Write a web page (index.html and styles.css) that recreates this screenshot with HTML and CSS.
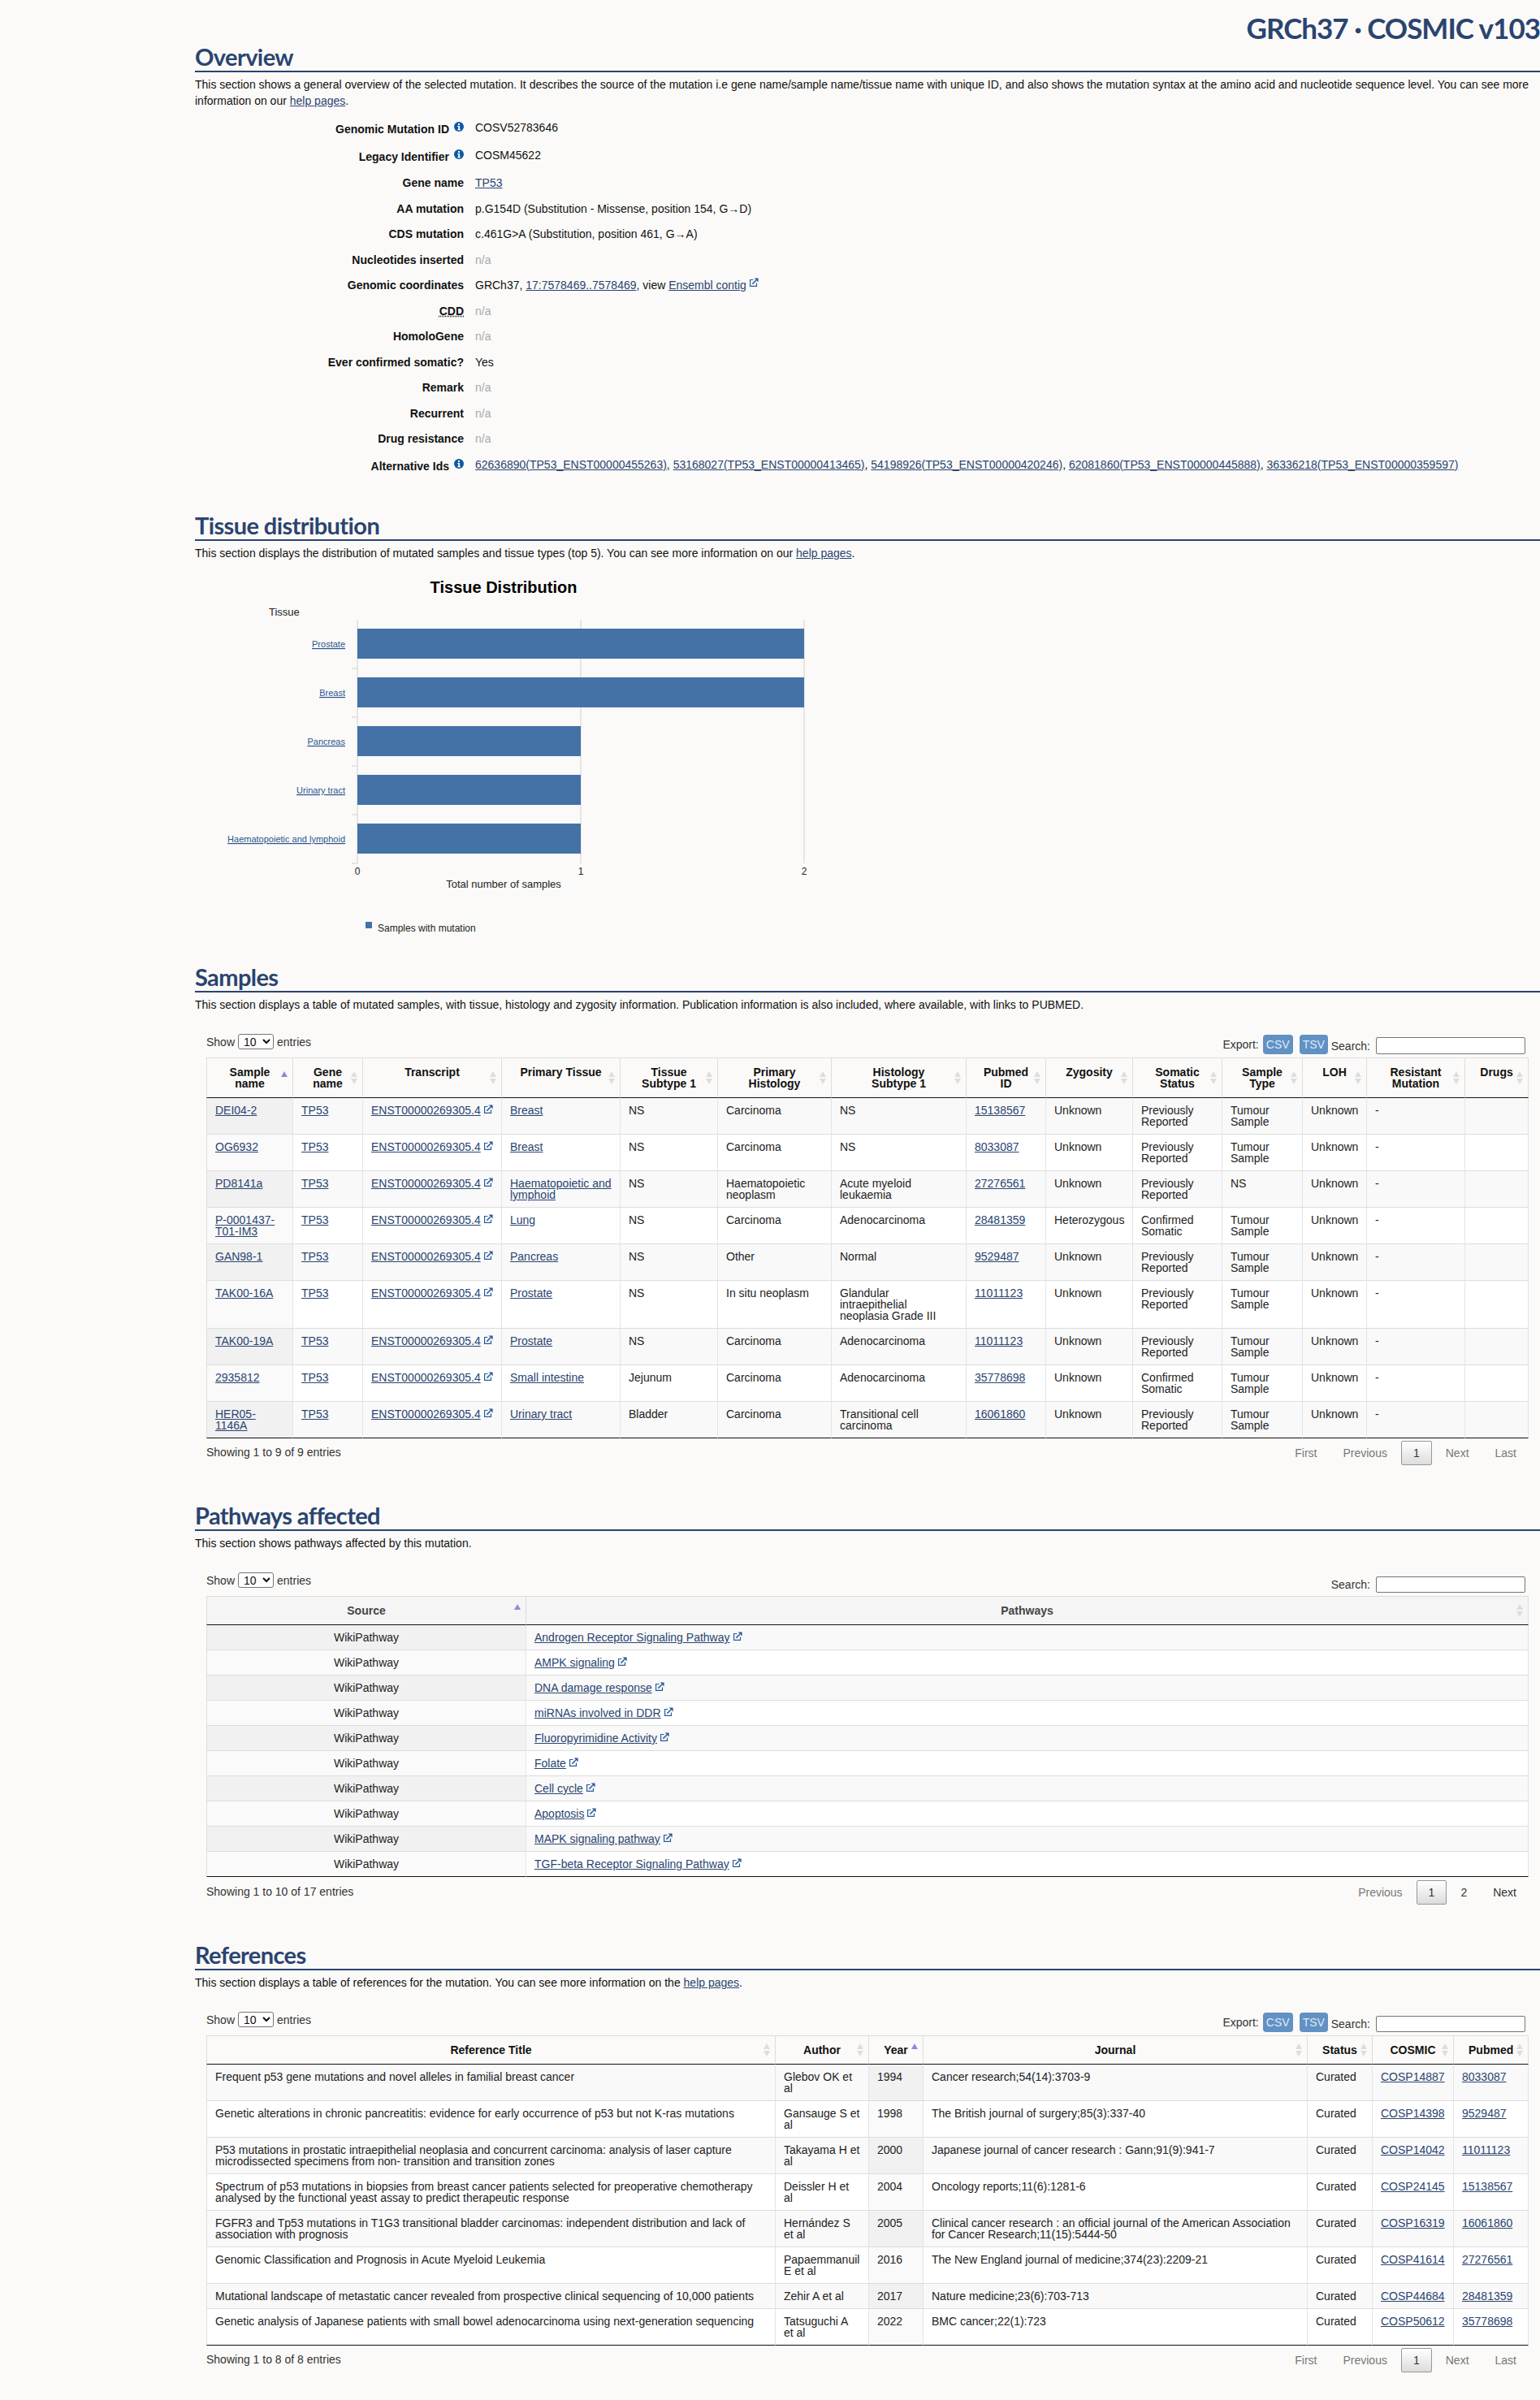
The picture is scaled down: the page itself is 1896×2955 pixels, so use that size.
FILE: index.html
```html
<!DOCTYPE html>
<html lang="en">
<head>
<meta charset="utf-8">
<title>COSMIC mutation overview</title>
<link rel="stylesheet" href="styles.css">
</head>
<body>
<svg class="sprite" xmlns="http://www.w3.org/2000/svg">
  <symbol id="ext" viewBox="0 0 11 11">
    <path d="M4.5 2.5H.6v7.9h7.9V6.5" fill="none" stroke="currentColor" stroke-width="1.2"/>
    <path d="M3.4 7.6 8 3" fill="none" stroke="currentColor" stroke-width="1.5"/>
    <path d="M5.6.4h5v5z" fill="currentColor"/>
  </symbol>
  <symbol id="info" viewBox="0 0 12 12">
    <circle cx="6" cy="6" r="6" fill="currentColor"/>
    <rect x="5" y="2" width="2" height="2" fill="#fff"/>
    <path d="M4.2 5h2.9v4.2h1V10.2H4.2V9.2h1V6H4.2z" fill="#fff"/>
  </symbol>
</svg>

<header class="site-title">GRCh37 · COSMIC v103</header>

<main class="content">
  <section class="sec sec-overview">
    <h2>Overview</h2>
    <p class="desc">This section shows a general overview of the selected mutation. It describes the source of the mutation i.e gene name/sample name/tissue name with unique ID, and also shows the mutation syntax at the amino acid and nucleotide sequence level. You can see more information on our <a href="#">help pages</a>.</p>
    <div class="facts">
      <div class="fact tall"><div class="lab"><span class="lab-t">Genomic Mutation ID</span><svg class="ic-info"><use href="#info"/></svg></div><div>COSV52783646</div></div>
      <div class="fact tall"><div class="lab"><span class="lab-t">Legacy Identifier</span><svg class="ic-info"><use href="#info"/></svg></div><div>COSM45622</div></div>
      <div class="fact"><div class="lab">Gene name</div><div><a href="#">TP53</a></div></div>
      <div class="fact"><div class="lab">AA mutation</div><div>p.G154D (Substitution - Missense, position 154, G→D)</div></div>
      <div class="fact"><div class="lab">CDS mutation</div><div>c.461G&gt;A (Substitution, position 461, G→A)</div></div>
      <div class="fact"><div class="lab">Nucleotides inserted</div><div class="na">n/a</div></div>
      <div class="fact"><div class="lab">Genomic coordinates</div><div>GRCh37, <a href="#">17:7578469..7578469</a>, view <a href="#">Ensembl contig</a><svg class="ic-ext"><use href="#ext"/></svg></div></div>
      <div class="fact"><div class="lab"><abbr>CDD</abbr></div><div class="na">n/a</div></div>
      <div class="fact"><div class="lab">HomoloGene</div><div class="na">n/a</div></div>
      <div class="fact"><div class="lab">Ever confirmed somatic?</div><div>Yes</div></div>
      <div class="fact"><div class="lab">Remark</div><div class="na">n/a</div></div>
      <div class="fact"><div class="lab">Recurrent</div><div class="na">n/a</div></div>
      <div class="fact"><div class="lab">Drug resistance</div><div class="na">n/a</div></div>
      <div class="fact"><div class="lab"><span class="lab-t">Alternative Ids</span><svg class="ic-info"><use href="#info"/></svg></div><div><a href="#">62636890(TP53_ENST00000455263)</a>, <a href="#">53168027(TP53_ENST00000413465)</a>, <a href="#">54198926(TP53_ENST00000420246)</a>, <a href="#">62081860(TP53_ENST00000445888)</a>, <a href="#">36336218(TP53_ENST00000359597)</a></div></div>
    </div>
  </section>

  <section class="sec sec-tissue">
    <h2>Tissue distribution</h2>
    <p class="desc">This section displays the distribution of mutated samples and tissue types (top 5). You can see more information on our <a href="#">help pages</a>.</p>
    <svg class="chart" width="1000" height="485" viewBox="0 0 1000 485" xmlns="http://www.w3.org/2000/svg">
      <text class="ch-title" x="380" y="30">Tissue Distribution</text>
      <text class="ch-axis" x="91" y="58">Tissue</text>
      <g class="ch-grid">
        <line x1="200" y1="63" x2="200" y2="363"/>
        <line x1="475" y1="63" x2="475" y2="363"/>
        <line x1="750" y1="63" x2="750" y2="363"/>
        <line x1="193" y1="123" x2="200" y2="123"/>
        <line x1="193" y1="183" x2="200" y2="183"/>
        <line x1="193" y1="243" x2="200" y2="243"/>
        <line x1="193" y1="303" x2="200" y2="303"/>
        <line x1="193" y1="363" x2="200" y2="363"/>
      </g>
      <g class="ch-bars">
        <rect x="200" y="74" width="550" height="37"/>
        <rect x="200" y="134" width="550" height="37"/>
        <rect x="200" y="194" width="275" height="37"/>
        <rect x="200" y="254" width="275" height="37"/>
        <rect x="200" y="314" width="275" height="37"/>
      </g>
      <g class="ch-cats">
        <a href="#"><text x="185" y="97">Prostate</text></a>
        <a href="#"><text x="185" y="157">Breast</text></a>
        <a href="#"><text x="185" y="217">Pancreas</text></a>
        <a href="#"><text x="185" y="277">Urinary tract</text></a>
        <a href="#"><text x="185" y="337">Haematopoietic and lymphoid</text></a>
      </g>
      <g class="ch-nums">
        <text x="200" y="377">0</text>
        <text x="475" y="377">1</text>
        <text x="750" y="377">2</text>
      </g>
      <text class="ch-xtitle" x="380" y="393">Total number of samples</text>
      <rect class="ch-leg" x="210" y="435" width="8" height="8"/>
      <text class="ch-legt" x="225" y="447">Samples with mutation</text>
    </svg>
  </section>

  <section class="sec sec-samples">
    <h2>Samples</h2>
    <p class="desc">This section displays a table of mutated samples, with tissue, histology and zygosity information. Publication information is also included, where available, with links to PUBMED.</p>
    <div class="dt">
      <div class="dt-top">
        <label class="dt-len">Show <select><option>10</option></select> entries</label>
        <div class="dt-right"><span class="dt-exp">Export:</span><a class="btn btn-csv">CSV</a><a class="btn btn-tsv">TSV</a><label class="dt-search">Search:<input type="text"></label></div>
      </div>
      <table class="tbl t-samples">
        <colgroup><col class="s1"><col class="s2"><col class="s3"><col class="s4"><col class="s5"><col class="s6"><col class="s7"><col class="s8"><col class="s9"><col class="s10"><col class="s11"><col class="s12"><col class="s13"><col class="s14"></colgroup>
        <thead><tr>
          <th class="sorted">Sample name</th><th class="sortable">Gene name</th><th class="sortable">Transcript</th><th class="sortable">Primary Tissue</th><th class="sortable">Tissue Subtype 1</th><th class="sortable">Primary Histology</th><th class="sortable">Histology<br>Subtype 1</th><th class="sortable">Pubmed ID</th><th class="sortable">Zygosity</th><th class="sortable">Somatic Status</th><th class="sortable">Sample Type</th><th class="sortable">LOH</th><th class="sortable">Resistant Mutation</th><th class="sortable">Drugs</th>
        </tr></thead>
        <tbody>
          <tr><td class="s-col"><a href="#">DEI04-2</a></td><td><a href="#">TP53</a></td><td class="nw"><a href="#">ENST00000269305.4</a><svg class="ic-ext"><use href="#ext"/></svg></td><td><a href="#">Breast</a></td><td>NS</td><td>Carcinoma</td><td>NS</td><td><a href="#">15138567</a></td><td>Unknown</td><td>Previously Reported</td><td>Tumour Sample</td><td>Unknown</td><td>-</td><td></td></tr>
          <tr><td class="s-col"><a href="#">OG6932</a></td><td><a href="#">TP53</a></td><td class="nw"><a href="#">ENST00000269305.4</a><svg class="ic-ext"><use href="#ext"/></svg></td><td><a href="#">Breast</a></td><td>NS</td><td>Carcinoma</td><td>NS</td><td><a href="#">8033087</a></td><td>Unknown</td><td>Previously Reported</td><td>Tumour Sample</td><td>Unknown</td><td>-</td><td></td></tr>
          <tr><td class="s-col"><a href="#">PD8141a</a></td><td><a href="#">TP53</a></td><td class="nw"><a href="#">ENST00000269305.4</a><svg class="ic-ext"><use href="#ext"/></svg></td><td><a href="#">Haematopoietic and lymphoid</a></td><td>NS</td><td>Haematopoietic neoplasm</td><td>Acute myeloid leukaemia</td><td><a href="#">27276561</a></td><td>Unknown</td><td>Previously Reported</td><td>NS</td><td>Unknown</td><td>-</td><td></td></tr>
          <tr><td class="s-col"><a href="#">P-0001437-T01-IM3</a></td><td><a href="#">TP53</a></td><td class="nw"><a href="#">ENST00000269305.4</a><svg class="ic-ext"><use href="#ext"/></svg></td><td><a href="#">Lung</a></td><td>NS</td><td>Carcinoma</td><td>Adenocarcinoma</td><td><a href="#">28481359</a></td><td>Heterozygous</td><td>Confirmed Somatic</td><td>Tumour Sample</td><td>Unknown</td><td>-</td><td></td></tr>
          <tr><td class="s-col"><a href="#">GAN98-1</a></td><td><a href="#">TP53</a></td><td class="nw"><a href="#">ENST00000269305.4</a><svg class="ic-ext"><use href="#ext"/></svg></td><td><a href="#">Pancreas</a></td><td>NS</td><td>Other</td><td>Normal</td><td><a href="#">9529487</a></td><td>Unknown</td><td>Previously Reported</td><td>Tumour Sample</td><td>Unknown</td><td>-</td><td></td></tr>
          <tr><td class="s-col"><a href="#">TAK00-16A</a></td><td><a href="#">TP53</a></td><td class="nw"><a href="#">ENST00000269305.4</a><svg class="ic-ext"><use href="#ext"/></svg></td><td><a href="#">Prostate</a></td><td>NS</td><td>In situ neoplasm</td><td>Glandular intraepithelial neoplasia Grade III</td><td><a href="#">11011123</a></td><td>Unknown</td><td>Previously Reported</td><td>Tumour Sample</td><td>Unknown</td><td>-</td><td></td></tr>
          <tr><td class="s-col"><a href="#">TAK00-19A</a></td><td><a href="#">TP53</a></td><td class="nw"><a href="#">ENST00000269305.4</a><svg class="ic-ext"><use href="#ext"/></svg></td><td><a href="#">Prostate</a></td><td>NS</td><td>Carcinoma</td><td>Adenocarcinoma</td><td><a href="#">11011123</a></td><td>Unknown</td><td>Previously Reported</td><td>Tumour Sample</td><td>Unknown</td><td>-</td><td></td></tr>
          <tr><td class="s-col"><a href="#">2935812</a></td><td><a href="#">TP53</a></td><td class="nw"><a href="#">ENST00000269305.4</a><svg class="ic-ext"><use href="#ext"/></svg></td><td><a href="#">Small intestine</a></td><td>Jejunum</td><td>Carcinoma</td><td>Adenocarcinoma</td><td><a href="#">35778698</a></td><td>Unknown</td><td>Confirmed Somatic</td><td>Tumour Sample</td><td>Unknown</td><td>-</td><td></td></tr>
          <tr><td class="s-col"><a href="#">HER05-1146A</a></td><td><a href="#">TP53</a></td><td class="nw"><a href="#">ENST00000269305.4</a><svg class="ic-ext"><use href="#ext"/></svg></td><td><a href="#">Urinary tract</a></td><td>Bladder</td><td>Carcinoma</td><td>Transitional cell carcinoma</td><td><a href="#">16061860</a></td><td>Unknown</td><td>Previously Reported</td><td>Tumour Sample</td><td>Unknown</td><td>-</td><td></td></tr>
        </tbody>
      </table>
      <div class="dt-bottom">
        <div class="dt-info">Showing 1 to 9 of 9 entries</div>
        <div class="pager"><a class="off">First</a><a class="off">Previous</a><a class="cur">1</a><a class="off">Next</a><a class="off">Last</a></div>
      </div>
    </div>
  </section>

  <section class="sec sec-pathways">
    <h2>Pathways affected</h2>
    <p class="desc">This section shows pathways affected by this mutation.</p>
    <div class="dt">
      <div class="dt-top">
        <label class="dt-len">Show <select><option>10</option></select> entries</label>
        <div class="dt-right"><label class="dt-search">Search:<input type="text" class="in-short"></label></div>
      </div>
      <table class="tbl t-path">
        <colgroup><col class="p1"><col class="p2"></colgroup>
        <thead><tr><th class="sorted">Source</th><th class="sortable">Pathways</th></tr></thead>
        <tbody>
          <tr><td class="s-col ctr">WikiPathway</td><td><a href="#">Androgen Receptor Signaling Pathway</a><svg class="ic-ext"><use href="#ext"/></svg></td></tr>
          <tr><td class="s-col ctr">WikiPathway</td><td><a href="#">AMPK signaling</a><svg class="ic-ext"><use href="#ext"/></svg></td></tr>
          <tr><td class="s-col ctr">WikiPathway</td><td><a href="#">DNA damage response</a><svg class="ic-ext"><use href="#ext"/></svg></td></tr>
          <tr><td class="s-col ctr">WikiPathway</td><td><a href="#">miRNAs involved in DDR</a><svg class="ic-ext"><use href="#ext"/></svg></td></tr>
          <tr><td class="s-col ctr">WikiPathway</td><td><a href="#">Fluoropyrimidine Activity</a><svg class="ic-ext"><use href="#ext"/></svg></td></tr>
          <tr><td class="s-col ctr">WikiPathway</td><td><a href="#">Folate</a><svg class="ic-ext"><use href="#ext"/></svg></td></tr>
          <tr><td class="s-col ctr">WikiPathway</td><td><a href="#">Cell cycle</a><svg class="ic-ext"><use href="#ext"/></svg></td></tr>
          <tr><td class="s-col ctr">WikiPathway</td><td><a href="#">Apoptosis</a><svg class="ic-ext"><use href="#ext"/></svg></td></tr>
          <tr><td class="s-col ctr">WikiPathway</td><td><a href="#">MAPK signaling pathway</a><svg class="ic-ext"><use href="#ext"/></svg></td></tr>
          <tr><td class="s-col ctr">WikiPathway</td><td><a href="#">TGF-beta Receptor Signaling Pathway</a><svg class="ic-ext"><use href="#ext"/></svg></td></tr>
        </tbody>
      </table>
      <div class="dt-bottom dt-bottom-low">
        <div class="dt-info">Showing 1 to 10 of 17 entries</div>
        <div class="pager"><a class="off">Previous</a><a class="cur">1</a><a class="on">2</a><a class="on">Next</a></div>
      </div>
    </div>
  </section>

  <section class="sec sec-refs">
    <h2>References</h2>
    <p class="desc">This section displays a table of references for the mutation. You can see more information on the <a href="#">help pages</a>.</p>
    <div class="dt">
      <div class="dt-top">
        <label class="dt-len">Show <select><option>10</option></select> entries</label>
        <div class="dt-right"><span class="dt-exp">Export:</span><a class="btn btn-csv">CSV</a><a class="btn btn-tsv">TSV</a><label class="dt-search">Search:<input type="text" class="in-short"></label></div>
      </div>
      <table class="tbl t-refs">
        <colgroup><col class="r1"><col class="r2"><col class="r3"><col class="r4"><col class="r5"><col class="r6"><col class="r7"></colgroup>
        <thead><tr><th class="sortable">Reference Title</th><th class="sortable">Author</th><th class="sorted">Year</th><th class="sortable">Journal</th><th class="sortable">Status</th><th class="sortable">COSMIC</th><th class="sortable">Pubmed</th></tr></thead>
        <tbody>
          <tr><td>Frequent p53 gene mutations and novel alleles in familial breast cancer</td><td>Glebov OK et al</td><td class="s-col">1994</td><td>Cancer research;54(14):3703-9</td><td>Curated</td><td><a href="#">COSP14887</a></td><td><a href="#">8033087</a></td></tr>
          <tr><td>Genetic alterations in chronic pancreatitis: evidence for early occurrence of p53 but not K-ras mutations</td><td>Gansauge S et al</td><td class="s-col">1998</td><td>The British journal of surgery;85(3):337-40</td><td>Curated</td><td><a href="#">COSP14398</a></td><td><a href="#">9529487</a></td></tr>
          <tr><td>P53 mutations in prostatic intraepithelial neoplasia and concurrent carcinoma: analysis of laser capture microdissected specimens from non- transition and transition zones</td><td>Takayama H et al</td><td class="s-col">2000</td><td>Japanese journal of cancer research : Gann;91(9):941-7</td><td>Curated</td><td><a href="#">COSP14042</a></td><td><a href="#">11011123</a></td></tr>
          <tr><td>Spectrum of p53 mutations in biopsies from breast cancer patients selected for preoperative chemotherapy analysed by the functional yeast assay to predict therapeutic response</td><td>Deissler H et al</td><td class="s-col">2004</td><td>Oncology reports;11(6):1281-6</td><td>Curated</td><td><a href="#">COSP24145</a></td><td><a href="#">15138567</a></td></tr>
          <tr><td>FGFR3 and Tp53 mutations in T1G3 transitional bladder carcinomas: independent distribution and lack of association with prognosis</td><td>Hernández S et al</td><td class="s-col">2005</td><td>Clinical cancer research : an official journal of the American Association for Cancer Research;11(15):5444-50</td><td>Curated</td><td><a href="#">COSP16319</a></td><td><a href="#">16061860</a></td></tr>
          <tr><td>Genomic Classification and Prognosis in Acute Myeloid Leukemia</td><td>Papaemmanuil E et al</td><td class="s-col">2016</td><td>The New England journal of medicine;374(23):2209-21</td><td>Curated</td><td><a href="#">COSP41614</a></td><td><a href="#">27276561</a></td></tr>
          <tr><td>Mutational landscape of metastatic cancer revealed from prospective clinical sequencing of 10,000 patients</td><td>Zehir A et al</td><td class="s-col">2017</td><td>Nature medicine;23(6):703-713</td><td>Curated</td><td><a href="#">COSP44684</a></td><td><a href="#">28481359</a></td></tr>
          <tr><td>Genetic analysis of Japanese patients with small bowel adenocarcinoma using next-generation sequencing</td><td>Tatsuguchi A et al</td><td class="s-col">2022</td><td>BMC cancer;22(1):723</td><td>Curated</td><td><a href="#">COSP50612</a></td><td><a href="#">35778698</a></td></tr>
        </tbody>
      </table>
      <div class="dt-bottom">
        <div class="dt-info">Showing 1 to 8 of 8 entries</div>
        <div class="pager"><a class="off">First</a><a class="off">Previous</a><a class="cur">1</a><a class="off">Next</a><a class="off">Last</a></div>
      </div>
    </div>
  </section>
</main>
</body>
</html>
```

FILE: styles.css
```css
* { box-sizing: border-box; }
html, body { margin: 0; padding: 0; }
body {
  background: #fbfaf8;
  color: #111;
  font-family: "Liberation Sans", Arial, sans-serif;
  font-size: 14px;
  line-height: 20px;
  min-height: 2955px;
}
a { color: #2a4470; text-decoration: underline; }
.sprite { display: none; }

.site-title {
  height: 52px;
  padding-top: 16px;
  text-align: right;
  font-family: Lato, "Noto Sans", sans-serif;
  font-weight: 700;
  font-size: 35px;
  line-height: 36px;
  letter-spacing: -1px;
  color: #2a4470;
}
.content { padding-left: 240px; }
.sec h2 {
  margin: 0;
  height: 37px;
  border-bottom: 2px solid #2a4470;
  font-family: Lato, "Noto Sans", sans-serif;
  font-weight: 700;
  font-size: 29px;
  line-height: 35px;
  letter-spacing: -0.6px;
  color: #2a4470;
}
.desc { margin: 5px 0 0; }
.sec-overview { margin-bottom: 36px; }
.sec-samples { margin-bottom: 44px; }
.sec-pathways { margin-bottom: 45px; }

/* facts list */
.facts { margin-top: 13px; }
.fact {
  display: grid;
  grid-template-columns: 331px 1fr;
  column-gap: 14px;
  height: 31.5px;
}
.fact.tall { height: 34px; }
.lab {
  display: flex;
  justify-content: flex-end;
  align-items: flex-start;
  font-weight: 700;
  column-gap: 6px;
}
.lab-t { padding-top: 2px; }
.lab abbr { text-decoration: underline dotted; }
.na { color: #a9a9a9; }
.ic-info { width: 12px; height: 12px; margin-top: 3px; color: #0b5aa3; flex: none; }
.ic-ext {
  width: 11px;
  height: 11px;
  margin-left: 4px;
  color: #2b5c9a;
  vertical-align: 1px;
}
.fact .ic-ext { vertical-align: 3px; }

/* chart */
.chart { display: block; margin-top: 9px; }
.chart text { font-family: "Liberation Sans", Arial, sans-serif; fill: #222; }
.chart .ch-title { font-size: 20px; font-weight: 700; text-anchor: middle; fill: #000; }
.ch-axis { font-size: 13px; }
.ch-grid line { stroke: #d0d0d0; stroke-width: 1; }
.ch-bars rect, .ch-leg { fill: #4472a6; }
.chart .ch-cats text { font-size: 11px; text-anchor: end; fill: #2a5590; text-decoration: underline; }
.ch-nums text { font-size: 12px; text-anchor: middle; }
.ch-xtitle { font-size: 13px; text-anchor: middle; }
.ch-legt { font-size: 12px; }

/* data tables */
.dt { margin: 0 0 0 14px; width: 1628px; }
.dt-top {
  display: flex;
  justify-content: space-between;
  align-items: flex-start;
  height: 29px;
  margin-top: 26px;
  color: #333;
}
.dt-len { display: flex; align-items: center; column-gap: 4px; height: 19px; }
.dt-len select {
  width: 44px;
  height: 19px;
  padding: 0 0 0 2px;
  background: #fff;
  border: 1px solid #767676;
  border-radius: 3px;
  font: 14px "Liberation Sans", Arial, sans-serif;
  color: #111;
}
.dt-right {
  display: flex;
  align-items: flex-end;
  height: 24px;
  margin-top: 1px;
  margin-right: 4px;
}
.dt-exp { margin-right: 5px; align-self: center; }
.btn {
  display: flex;
  align-items: center;
  justify-content: center;
  height: 24px;
  background: #6291c4;
  color: #dfeaf6;
  text-decoration: none;
  border-radius: 4px;
}
.btn-csv { width: 37px; margin-right: 8px; }
.btn-tsv { width: 35px; margin-right: 4px; }
.dt-search { display: flex; align-items: center; column-gap: 7px; }
.dt-search input {
  width: 184px;
  height: 21px;
  padding: 0;
  background: #fff;
  border: 1px solid #767676;
  border-radius: 2px;
}
.dt-search input.in-short { height: 20px; }

.tbl {
  width: 1628px;
  table-layout: fixed;
  border-collapse: separate;
  border-spacing: 0;
  line-height: 14px;
}
.tbl th {
  position: relative;
  padding: 10px 18px;
  vertical-align: top;
  font-weight: 700;
  text-align: center;
  color: #111;
  border-top: 1px solid #ddd;
  border-right: 1px solid #ddd;
  border-bottom: 1px solid #111;
}
.tbl th:first-child, .tbl td:first-child { border-left: 1px solid #ddd; }
.tbl td {
  padding: 8px 10px;
  vertical-align: top;
  border-right: 1px solid #e4e4e4;
  border-top: 1px solid #ddd;
  background: #fff;
  color: #222;
}
.tbl tbody tr:first-child td { border-top: 0; }
.tbl tbody tr:last-child td { border-bottom: 1px solid #111; }
.tbl tbody tr:nth-child(odd) td { background: #f9f9f9; }
.tbl tbody tr:nth-child(even) td.s-col { background: #fafafa; }
.tbl tbody tr:nth-child(odd) td.s-col { background: #f1f1f1; }
.tbl td.ctr { text-align: center; }
.tbl td.nw { white-space: nowrap; }

.tbl th.sortable::before, .tbl th.sortable::after, .tbl th.sorted::before {
  content: "";
  position: absolute;
  right: 6px;
  top: 50%;
  border-left: 4px solid transparent;
  border-right: 4px solid transparent;
}
.tbl th.sortable::before, .tbl th.sorted::before { margin-top: -8px; border-bottom: 7px solid #ddd; }
.tbl th.sortable::after { margin-top: 1px; border-top: 7px solid #ddd; }
.tbl th.sorted::before { border-bottom-color: #8b8bdc; }

.t-path th { background: #f5f5f5; }
.tbl.t-path th { color: #444; }

.s1 { width: 107px; } .s2 { width: 86px; } .s3 { width: 171px; } .s4 { width: 146px; }
.s5 { width: 120px; } .s6 { width: 140px; } .s7 { width: 166px; } .s8 { width: 98px; }
.s9 { width: 107px; } .s10 { width: 110px; } .s11 { width: 99px; } .s12 { width: 79px; }
.s13 { width: 121px; } .s14 { width: 78px; }
.p1 { width: 394px; } .p2 { width: 1234px; }
.r1 { width: 701px; } .r2 { width: 115px; } .r3 { width: 67px; } .r4 { width: 473px; }
.r5 { width: 80px; } .r6 { width: 100px; } .r7 { width: 92px; }

.dt-bottom {
  display: flex;
  justify-content: space-between;
  align-items: flex-start;
  height: 33px;
  line-height: 14px;
}
.dt-bottom-low { padding-top: 1px; }
.dt-info { padding-top: 10px; color: #333; }
.pager { display: flex; padding-top: 3px; }
.pager a {
  padding: 7px 14px;
  margin-left: 2px;
  border: 1px solid transparent;
  border-radius: 2px;
  text-decoration: none;
  color: #333;
}
.pager a.off { color: #777; }
.pager a.cur {
  border-color: #979797;
  background: linear-gradient(to bottom, #fff 0%, #dcdcdc 100%);
  color: #333;
}
```
